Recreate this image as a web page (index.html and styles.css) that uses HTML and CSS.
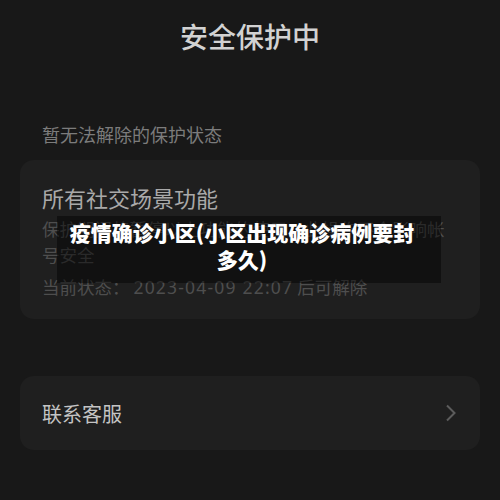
FILE: index.html
```html
<!DOCTYPE html>
<html lang="zh-CN">
<head>
    <meta charset="UTF-8">
    <meta name="viewport" content="width=device-width, initial-scale=1.0">
    <title>安全保护中</title>
    <link rel="stylesheet" href="styles.css">
</head>
<body>
    <div class="main">
        <h1 class="title">安全保护中</h1>
        <p class="label">暂无法解除的保护状态</p>
        <div class="card">
            <h2 class="card-title">所有社交场景功能</h2>
            <p class="desc">保护期间将暂停以上功能的使用，此操作不会影响帐号安全</p>
            <p class="status">当前状态：&nbsp;<span class="time">2023-04-09 22:07</span> 后可解除</p>
        </div>
        <div class="card row">
            <span class="row-text">联系客服</span>
            <svg class="chevron" width="12" height="18" viewBox="0 0 12 18">
                <path d="M2 1.5 L9.5 9 L2 16.5" fill="none" stroke="#5c5c5c" stroke-width="2"/>
            </svg>
        </div>
        <div class="caption">疫情确诊小区(小区出现确诊病例要封多久)</div>
    </div>
</body>
</html>
```

FILE: styles.css
```css
*{
    padding: 0;
    margin: 0;
    box-sizing: border-box;
}
body{
    background: #181818;
    font-family: "Noto Sans CJK SC", "Noto Sans", sans-serif;
}
.main{
    position: relative;
    width: 100%;
    height: 100vh;
    overflow: hidden;
}
.title{
    height: 72px;
    line-height: 72px;
    text-align: center;
    font-size: 28px;
    font-weight: 500;
    color: #d2d2d2;
}
.label{
    margin-top: 50px;
    margin-bottom: 14px;
    padding-left: 42px;
    line-height: 24px;
    font-size: 18px;
    color: #7c7c7c;
}
.card{
    margin: 0 20px;
    background: #1f1f1f;
    border-radius: 14px;
    padding: 22px 22px 19px;
}
.card-title{
    font-size: 22px;
    font-weight: 400;
    line-height: 30px;
    color: #a9a9a9;
}
.desc{
    margin-top: 4px;
    font-size: 17.5px;
    line-height: 26px;
    color: #4e4e4e;
}
.status{
    margin-top: 6px;
    font-size: 17.5px;
    line-height: 26px;
    color: #4e4e4e;
}
.time{
    font-family: "Noto Sans", "Liberation Sans", sans-serif;
    letter-spacing: 1.2px;
}
.row{
    margin-top: 57px;
    height: 74px;
    padding: 0 22px;
    display: flex;
    align-items: center;
    justify-content: space-between;
}
.row-text{
    font-size: 20px;
    color: #c4c4c4;
}
.chevron{
    margin-right: 1px;
}
.caption{
    position: absolute;
    left: 57px;
    top: 216px;
    width: 384px;
    height: 67px;
    padding: 3px 24px 0 10px;
    background: rgba(0, 0, 0, 0.45);
    color: #fff;
    font-size: 21px;
    font-weight: 900;
    line-height: 27px;
    text-align: center;
}
```
